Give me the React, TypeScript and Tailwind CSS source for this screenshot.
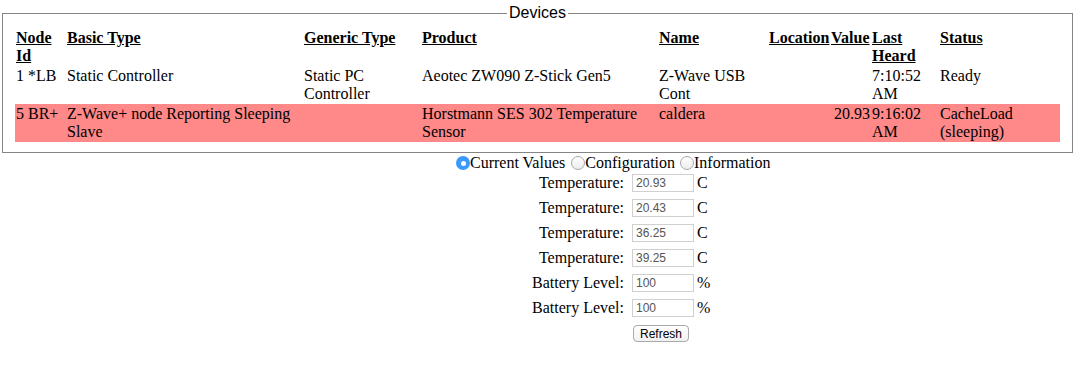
import React from "react";

const serif = "font-['Liberation_Serif','Times_New_Roman',serif]";
const sans = "font-['Liberation_Sans',Arial,sans-serif]";

type Row = {
  id: string;
  basic: string;
  generic: string;
  product: string;
  name: string;
  location: string;
  value: string;
  heard: string;
  status: string;
  highlight?: boolean;
};

const rows: Row[] = [
  {
    id: "1 *LB",
    basic: "Static Controller",
    generic: "Static PC Controller",
    product: "Aeotec ZW090 Z-Stick Gen5",
    name: "Z-Wave USB Cont",
    location: "",
    value: "",
    heard: "7:10:52 AM",
    status: "Ready",
  },
  {
    id: "5 BR+",
    basic: "Z-Wave+ node Reporting Sleeping Slave",
    generic: "",
    product: "Horstmann SES 302 Temperature Sensor",
    name: "caldera",
    location: "",
    value: "20.93",
    heard: "9:16:02 AM",
    status: "CacheLoad (sleeping)",
    highlight: true,
  },
];

const values = [
  { label: "Temperature:", value: "20.93", unit: "C" },
  { label: "Temperature:", value: "20.43", unit: "C" },
  { label: "Temperature:", value: "36.25", unit: "C" },
  { label: "Temperature:", value: "39.25", unit: "C" },
  { label: "Battery Level:", value: "100", unit: "%" },
  { label: "Battery Level:", value: "100", unit: "%" },
];

function Radio({ checked, className = "" }: { checked?: boolean; className?: string }) {
  if (checked) {
    return (
      <span
        className={`flex h-[14px] w-[14px] shrink-0 items-center justify-center rounded-full bg-[#3b99fc] ${className}`}
      >
        <span className="block h-[5px] w-[5px] rounded-full bg-white" />
      </span>
    );
  }
  return (
    <span
      className={`block h-[14px] w-[14px] shrink-0 rounded-full border border-[#a8a8a8] bg-gradient-to-b from-white to-[#ededed] ${className}`}
    />
  );
}

const th = "p-[1px] text-left align-top font-bold underline";
const td = "p-[1px] align-top";

export default function App() {
  return (
    <div className={`${serif} min-h-[367px] w-[1079px] bg-white text-[16px] leading-[18px] text-black`}>
      <fieldset className="mx-[2px] mt-[4px] w-[1071px] border border-[#858585] px-[12px] pb-[10px] pt-[6px]">
        <legend className={`${sans} mx-auto px-[2px] text-[16px] leading-[18px]`}>Devices</legend>
        <table className="w-[1045px] table-fixed border-collapse">
          <colgroup>
            <col className="w-[51px]" />
            <col className="w-[237px]" />
            <col className="w-[118px]" />
            <col className="w-[237px]" />
            <col className="w-[110px]" />
            <col className="w-[62px]" />
            <col className="w-[41px]" />
            <col className="w-[68px]" />
            <col className="w-[121px]" />
          </colgroup>
          <thead>
            <tr>
              <th className={th}>Node Id</th>
              <th className={th}>Basic Type</th>
              <th className={th}>Generic Type</th>
              <th className={th}>Product</th>
              <th className={th}>Name</th>
              <th className={`${th} whitespace-nowrap`}>Location</th>
              <th className={`${th} whitespace-nowrap`}>Value</th>
              <th className={th}>Last Heard</th>
              <th className={th}>Status</th>
            </tr>
          </thead>
          <tbody>
            {rows.map((r) => (
              <tr key={r.id} className={r.highlight ? "bg-[#ff8888]" : ""}>
                <td className={`${td} whitespace-nowrap`}>{r.id}</td>
                <td className={td}>{r.basic}</td>
                <td className={td}>{r.generic}</td>
                <td className={td}>{r.product}</td>
                <td className={td}>{r.name}</td>
                <td className={td}>{r.location}</td>
                <td className={`${td} text-right`}>{r.value}</td>
                <td className={td}>{r.heard}</td>
                <td className={td}>{r.status}</td>
              </tr>
            ))}
          </tbody>
        </table>
      </fieldset>

      <div className="flex h-[17px] items-start pl-[456px] pt-[1px]">
        <div className="flex h-[18px] items-center">
          <Radio checked />
          <span>Current Values</span>
          <Radio className="ml-[6px]" />
          <span>Configuration</span>
          <Radio className="ml-[5px]" />
          <span>Information</span>
        </div>
      </div>

      <div className="ml-[520px] grid w-[200px] grid-cols-[104px_70px_26px]">
        {values.map((v, i) => (
          <React.Fragment key={i}>
            <div className="flex h-[25px] items-center justify-end">{v.label}</div>
            <div className="flex h-[25px] items-center justify-end">
              <div
                className={`${sans} flex h-[18px] w-[62px] items-center border border-[#d0d0d0] bg-white pl-[3px] pt-[1px] text-[12px] text-[#555555]`}
              >
                {v.value}
              </div>
            </div>
            <div className="flex h-[25px] items-center pl-[3px]">{v.unit}</div>
          </React.Fragment>
        ))}
        <div className="h-[25px]" />
        <div className="flex h-[25px] items-center pl-[9px] pt-[2px]">
          <button
            className={`${sans} flex h-[17px] w-[56px] items-center justify-center rounded-[4px] border border-[#a9a9a9] bg-gradient-to-b from-white to-[#f1f1f1] text-[12px] leading-none text-black`}
          >
            Refresh
          </button>
        </div>
        <div className="h-[25px]" />
      </div>
    </div>
  );
}
